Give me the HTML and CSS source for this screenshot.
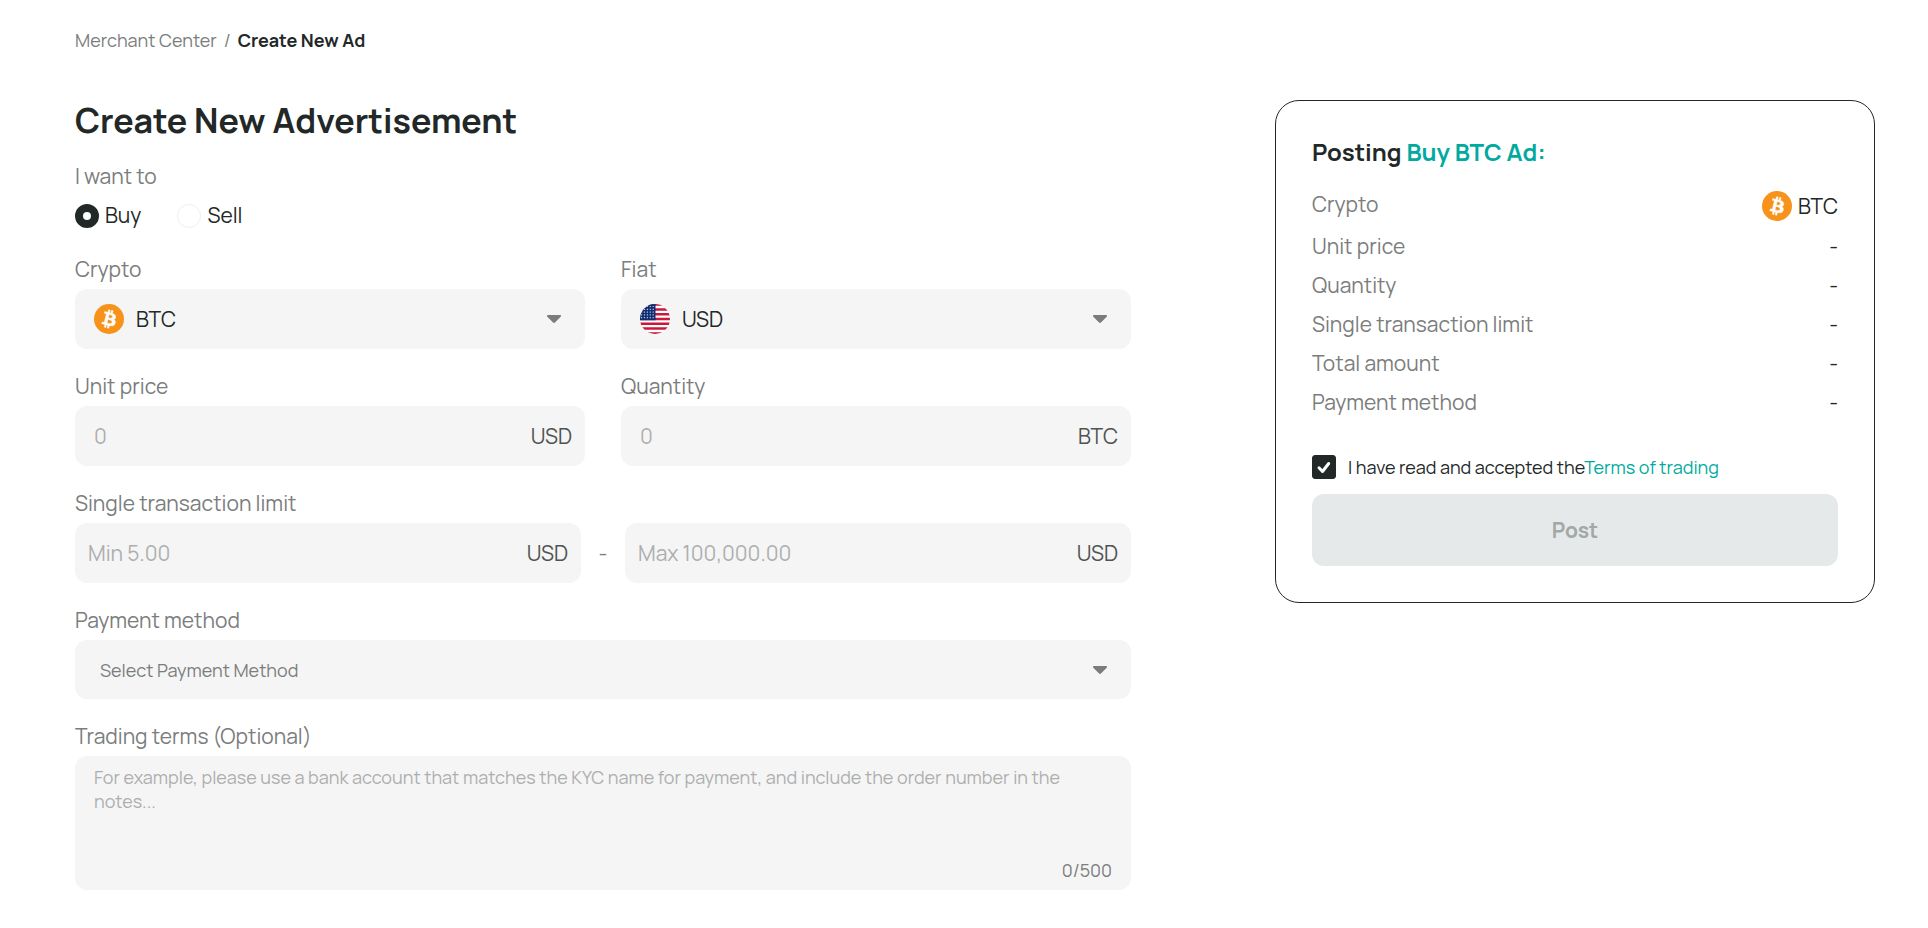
FILE: index.html
```
<!DOCTYPE html>
<html lang="en">
<head>
<meta charset="utf-8">
<meta name="viewport" content="width=device-width, initial-scale=1">
<title>Create New Ad</title>
<link rel="stylesheet" href="styles.css">
</head>
<body>
<svg class="defs" aria-hidden="true">
  <symbol id="btc" viewBox="0 0 32 32">
    <circle cx="16" cy="16" r="16" fill="#f7931a"/>
    <path fill="#fff" stroke="#fff" stroke-width=".4" d="M23.189 14.02c.314-2.096-1.283-3.223-3.465-3.975l.708-2.84-1.728-.43-.69 2.765c-.454-.114-.92-.22-1.385-.326l.695-2.783L15.596 6l-.708 2.839c-.376-.086-.746-.17-1.104-.26l.002-.009-2.384-.595-.46 1.846s1.283.294 1.256.312c.7.175.826.638.805 1.006l-.806 3.235c.048.012.11.03.18.057l-.183-.045-1.13 4.532c-.086.212-.303.531-.793.41.018.025-1.256-.313-1.256-.313l-.858 1.978 2.25.561c.418.105.828.215 1.231.318l-.715 2.872 1.727.43.708-2.84c.472.127.93.245 1.378.357l-.706 2.828 1.728.43.715-2.866c2.948.558 5.164.333 6.097-2.333.752-2.146-.037-3.385-1.588-4.192 1.13-.26 1.98-1.003 2.207-2.538zm-3.95 5.538c-.533 2.147-4.148.986-5.32.695l.95-3.805c1.172.293 4.929.872 4.37 3.11zm.535-5.569c-.487 1.953-3.495.96-4.47.717l.86-3.45c.975.243 4.118.696 3.61 2.733z"/>
  </symbol>
  <symbol id="caret" viewBox="0 0 14 8">
    <path fill="#7b7d7d" d="M1 0h12c.9 0 1.300 1 .7 1.700L8.200 7.300c-.7.8-1.700.8-2.400 0L.3 1.700C-.3 1 .1 0 1 0z"/>
  </symbol>
</svg>

<nav class="breadcrumb" aria-label="Breadcrumb">
  <a href="#">Merchant Center</a>
  <span>/</span>
  <strong>Create New Ad</strong>
</nav>

<main class="layout">
  <form class="form">
    <h1 class="title">Create New Advertisement</h1>

    <fieldset class="side">
      <legend class="label">I want to</legend>
      <div class="options">
        <label class="option"><input class="radio" type="radio" name="side" checked>Buy</label>
        <label class="option"><input class="radio" type="radio" name="side">Sell</label>
      </div>
    </fieldset>

    <div class="rows">
      <div class="pair">
        <div class="field">
          <label class="label" for="crypto">Crypto</label>
          <div class="box box-select">
            <svg class="coin" aria-hidden="true"><use href="#btc"/></svg>
            <select class="select" id="crypto"><option>BTC</option></select>
            <svg class="caret" aria-hidden="true"><use href="#caret"/></svg>
          </div>
        </div>
        <div class="field">
          <label class="label" for="fiat">Fiat</label>
          <div class="box box-select">
            <svg class="coin" viewBox="0 0 30 30" aria-hidden="true">
              <clipPath id="round"><circle cx="15" cy="15" r="15"/></clipPath>
              <g clip-path="url(#round)">
                <path fill="#fff" d="M0 0h30v30H0z"/>
                <path stroke="#c8193c" stroke-width="2.500" d="M0 .6h30M0 5.400h30M0 10.200h30M0 15h30M0 19.800h30M0 24.600h30M0 29.400h30"/>
                <path fill="#0f2f72" d="M0 0h15.500v16.200H0z"/>
                <path stroke="#b9c4da" stroke-width="1.200" stroke-dasharray="1.200 1.700" d="M1 2.500h14M1 5.300h14M1 8.100h14M1 10.900h14M1 13.700h14"/>
              </g>
            </svg>
            <select class="select" id="fiat"><option>USD</option></select>
            <svg class="caret" aria-hidden="true"><use href="#caret"/></svg>
          </div>
        </div>
      </div>

      <div class="pair">
        <div class="field">
          <label class="label" for="price">Unit price</label>
          <div class="box box-indent">
            <input class="input" id="price" type="text" placeholder="0">
            <span class="unit">USD</span>
          </div>
        </div>
        <div class="field">
          <label class="label" for="quantity">Quantity</label>
          <div class="box box-indent">
            <input class="input" id="quantity" type="text" placeholder="0">
            <span class="unit">BTC</span>
          </div>
        </div>
      </div>

      <div class="field">
        <label class="label" for="min">Single transaction limit</label>
        <div class="range">
          <div class="box">
            <input class="input" id="min" type="text" placeholder="Min 5.00">
            <span class="unit">USD</span>
          </div>
          <span class="dash">-</span>
          <div class="box">
            <input class="input" type="text" aria-label="Maximum transaction limit" placeholder="Max 100,000.00">
            <span class="unit">USD</span>
          </div>
        </div>
      </div>

      <div class="field">
        <label class="label" for="payment">Payment method</label>
        <div class="box box-payment">
          <select class="select select-empty" id="payment"><option>Select Payment Method</option></select>
          <svg class="caret" aria-hidden="true"><use href="#caret"/></svg>
        </div>
      </div>

      <div class="field">
        <label class="label" for="terms">Trading terms (Optional)</label>
        <div class="note">
          <textarea class="textarea" id="terms" rows="3" maxlength="500" placeholder="For example, please use a bank account that matches the KYC name for payment, and include the order number in the notes..."></textarea>
          <span class="count">0/500</span>
        </div>
      </div>
    </div>
  </form>

  <aside class="card">
    <h2 class="card-title">Posting <span class="accent">Buy BTC Ad:</span></h2>
    <dl class="summary">
      <div class="line"><dt>Crypto</dt><dd class="asset"><svg class="coin" aria-hidden="true"><use href="#btc"/></svg>BTC</dd></div>
      <div class="line"><dt>Unit price</dt><dd>-</dd></div>
      <div class="line"><dt>Quantity</dt><dd>-</dd></div>
      <div class="line"><dt>Single transaction limit</dt><dd>-</dd></div>
      <div class="line"><dt>Total amount</dt><dd>-</dd></div>
      <div class="line"><dt>Payment method</dt><dd>-</dd></div>
    </dl>
    <div class="agree">
      <span class="check">
        <input class="checkbox" id="agree" type="checkbox" checked>
        <svg class="tick" viewBox="0 0 24 24" aria-hidden="true"><path fill="none" stroke="#fff" stroke-width="3" stroke-linecap="round" stroke-linejoin="round" d="M7 12.800l3.500 3.700L16.700 8.500"/></svg>
      </span>
      <span><label for="agree">I have read and accepted the</label><a class="accent" href="#">Terms of trading</a></span>
    </div>
    <button class="post" type="button" disabled>Post</button>
  </aside>
</main>
</body>
</html>
```
FILE: styles.css
```
* {
  box-sizing: border-box;
}

body {
  margin: 0;
  padding: 27px 53px 24px 75px;
  background: #fff;
  color: #222827;
  font-family: Manrope, Inter, "Liberation Sans", sans-serif;
  font-size: 21px;
  line-height: 26px;
}

input,
select,
textarea,
button {
  margin: 0;
  padding: 0;
  border: 0;
  background: transparent;
  color: inherit;
  font: inherit;
}

a {
  color: inherit;
  text-decoration: none;
}

.defs {
  display: none;
}

.breadcrumb {
  display: flex;
  gap: 7px;
  margin-bottom: 47px;
  color: #7b7d7d;
  font-size: 18px;
}

.breadcrumb strong {
  color: #222827;
}

.layout {
  display: grid;
  grid-template-columns: minmax(0, 1fr) minmax(0, 600px);
  gap: 144px;
  align-items: start;
}

.title {
  margin: 0 0 23px;
  font-size: 34px;
  line-height: 40px;
}

.side {
  margin: 0 0 28px;
  padding: 0;
  border: 0;
}

.label {
  display: block;
  padding: 0;
  color: #7b7d7d;
}

.options {
  display: flex;
  gap: 36px;
  padding-top: 14px;
}

.option {
  display: flex;
  align-items: center;
  gap: 6px;
  line-height: 25px;
}

.radio {
  appearance: none;
  width: 24px;
  height: 24px;
  border: 1px solid #eeefef;
  border-radius: 50%;
}

.radio:checked {
  border: 8px solid #222827;
}

.rows {
  display: grid;
  gap: 24px;
}

.pair {
  display: grid;
  grid-template-columns: 1fr 1fr;
  gap: 36px;
}

.field {
  display: grid;
  gap: 7px;
}

.box {
  display: flex;
  align-items: center;
  flex: 1;
  min-width: 0;
  height: 60px;
  padding: 0 13px;
  border-radius: 12px;
  background: #f5f5f5;
}

.box-indent {
  padding-left: 19px;
}

.box-select {
  gap: 12px;
  padding: 0 24px 0 19px;
}

.box-payment {
  height: 59px;
  padding: 0 24px 0 25px;
}

.coin {
  flex: none;
  width: 30px;
  height: 30px;
}

.caret {
  flex: none;
  width: 14px;
  height: 8px;
}

.select {
  appearance: none;
  flex: 1;
  min-width: 0;
  height: 100%;
}

.select-empty {
  color: #7b7d7d;
  font-size: 18px;
}

.input {
  flex: 1;
  min-width: 0;
  height: 100%;
}

.input::placeholder,
.textarea::placeholder {
  color: #adafaf;
  opacity: 1;
}

.unit {
  color: #4f5352;
}

.range {
  display: flex;
  align-items: center;
}

.dash {
  flex: none;
  width: 44px;
  color: #7b7d7d;
  text-align: center;
}

.note {
  display: grid;
  height: 134px;
  padding: 9px 19px 8px;
  border-radius: 12px;
  background: #f5f5f5;
  font-size: 18px;
  line-height: 24px;
}

.textarea {
  resize: none;
}

.count {
  align-self: end;
  justify-self: end;
  color: #7b7d7d;
}

.card {
  padding: 36px;
  border: 1px solid #222827;
  border-radius: 24px;
}

.card-title {
  margin: 0 0 24px;
  font-size: 24px;
  line-height: 30px;
}

.accent {
  color: #01aaa0;
}

.summary {
  display: grid;
  gap: 12px;
  margin: 0 0 39px;
  line-height: 27px;
}

.line {
  display: flex;
  justify-content: space-between;
}

.line dt {
  color: #7b7d7d;
}

.line dd {
  margin: 0;
}

.asset {
  display: flex;
  align-items: center;
  gap: 6px;
}

.agree {
  display: flex;
  align-items: center;
  gap: 12px;
  margin-bottom: 15px;
  font-size: 18px;
  line-height: 24px;
}

.check {
  display: grid;
}

.checkbox,
.tick {
  grid-area: 1 / 1;
  width: 24px;
  height: 24px;
}

.checkbox {
  appearance: none;
  border: 1px solid #222827;
  border-radius: 3px;
}

.checkbox:checked {
  background: #222827;
}

.tick {
  pointer-events: none;
}

.post {
  display: block;
  width: 100%;
  height: 72px;
  border-radius: 12px;
  background: #e5e9e9;
  color: #a3a7a7;
  font-weight: 700;
}
```
